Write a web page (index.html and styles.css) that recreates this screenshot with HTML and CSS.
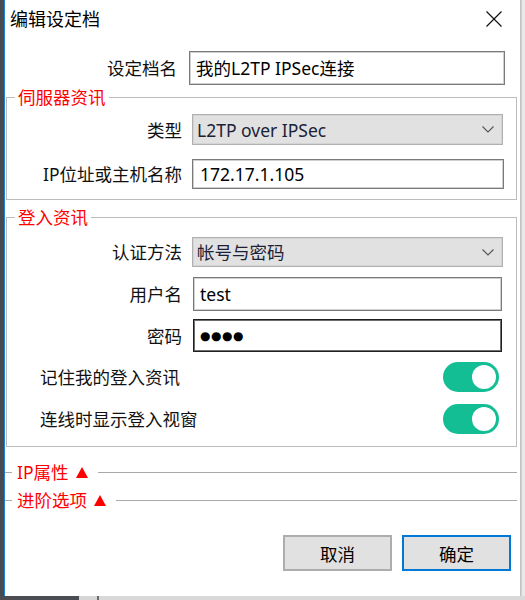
FILE: index.html
```html
<!DOCTYPE html>
<html lang="zh-CN">
<head>
<meta charset="utf-8">
<title>编辑设定档</title>
<link rel="stylesheet" href="styles.css">
</head>
<body>
<div class="screen">
  <div class="desk-left"></div>
  <div class="dialog">
    <div class="titlebar">
      <span class="title">编辑设定档</span>
      <svg class="close" width="16" height="16" viewBox="0 0 16 16"><path d="M0.5 0.5L15.5 15.5M15.5 0.5L0.5 15.5" stroke="#111" stroke-width="1.2" fill="none"/></svg>
    </div>

    <div class="name-row">
      <span class="lbl">设定档名</span>
      <div class="field">我的L2TP IPSec连接</div>
    </div>

    <fieldset class="group g1">
      <legend>伺服器资讯</legend>
      <div class="frow">
        <span class="lbl">类型</span>
        <div class="select h31"><span class="sel-text">L2TP over IPSec</span><svg class="chev" width="12" height="7" viewBox="0 0 12 7"><polyline points="0.5,0.5 6,6 11.5,0.5" fill="none" stroke="#555" stroke-width="1.1"/></svg></div>
      </div>
      <div class="frow mt14">
        <span class="lbl">IP位址或主机名称</span>
        <div class="field h30 pl7">172.17.1.105</div>
      </div>
    </fieldset>

    <fieldset class="group g2">
      <legend>登入资讯</legend>
      <div class="frow">
        <span class="lbl">认证方法</span>
        <div class="select h30"><span class="sel-text">帐号与密码</span><svg class="chev" width="12" height="7" viewBox="0 0 12 7"><polyline points="0.5,0.5 6,6 11.5,0.5" fill="none" stroke="#555" stroke-width="1.1"/></svg></div>
      </div>
      <div class="frow mt10">
        <span class="lbl">用户名</span>
        <div class="field narrow">test</div>
      </div>
      <div class="frow mt8">
        <span class="lbl">密码</span>
        <div class="field narrow h33 focused"><span class="dots">●●●●</span></div>
      </div>
      <div class="toggle-row mt10">
        <span>记住我的登入资讯</span>
        <span class="toggle"><span class="knob"></span></span>
      </div>
      <div class="toggle-row mt12">
        <span>连线时显示登入视窗</span>
        <span class="toggle"><span class="knob"></span></span>
      </div>
    </fieldset>

    <div class="collapsed c1">
      <span class="dash"></span>
      <span class="c-label">IP属性</span>
      <svg class="tri" width="12" height="11" viewBox="0 0 12 11"><polygon points="6,0 12,11 0,11" fill="#ff0000"/></svg>
      <span class="rule"></span>
    </div>
    <div class="collapsed">
      <span class="dash"></span>
      <span class="c-label">进阶选项</span>
      <svg class="tri" width="12" height="11" viewBox="0 0 12 11"><polygon points="6,0 12,11 0,11" fill="#ff0000"/></svg>
      <span class="rule"></span>
    </div>

    <div class="buttons">
      <button class="btn">取消</button>
      <button class="btn primary">确定</button>
    </div>
  </div>
  <div class="desk-right"></div>
  <div class="desk-bottom">
    <span class="db-dark"></span>
    <span class="db-light"></span>
    <span class="db-line"></span>
    <span class="db-rest"></span>
  </div>
</div>
</body>
</html>
```

FILE: styles.css
```css
* { box-sizing: border-box; }
html, body { margin: 0; padding: 0; }
body {
  width: 525px;
  height: 600px;
  overflow: hidden;
  background: #dcdcdc;
  font-family: "Noto Sans", "Noto Sans CJK SC", sans-serif;
  font-size: 17.5px;
  line-height: 20px;
  color: #111;
}
.screen {
  display: grid;
  grid-template-columns: 4px 517px 4px;
  grid-template-rows: 596px 4px;
  width: 525px;
  height: 600px;
}
.desk-left { background: #474a4f; }
.desk-right { background: #e9e9e9; border-left: 1px solid #cfcfcf; }
.desk-bottom { grid-column: 1 / 4; display: flex; }
.db-dark { width: 79px; background: #4b4d52; }
.db-light { width: 18px; background: #d6d6d6; }
.db-line { width: 2px; background: #6a6a6a; }
.db-rest { flex: 1; background: #d9d9d9; }

.dialog {
  background: #fff;
  border-left: 1px solid #1a84d8;
  border-right: 1px solid #c4c4c4;
  display: flex;
  flex-direction: column;
}
.titlebar {
  height: 40px;
  display: flex;
  align-items: center;
  justify-content: space-between;
  padding: 0 18px 2px 5px;
}
.title { font-size: 18px; color: #000; }
.close { display: block; }

.name-row {
  margin-top: 11px;
  display: grid;
  grid-template-columns: 172px 316px;
  column-gap: 12px;
  align-items: center;
}
.lbl { text-align: right; color: #111; white-space: nowrap; }

.field {
  height: 34px;
  border: 1px solid #7a7a7a;
  box-shadow: inset 0 0 0 1px #cfcfcf;
  padding-left: 6px;
  display: flex;
  align-items: center;
  color: #000;
  background: #fff;
}
.field.h30 { height: 30px; }
.field.h33 { height: 33px; }
.field.pl7 { padding-left: 7px; }
.field.narrow { margin-left: 1px; margin-right: 2px; }
.field.focused { border-color: #1f1f1f; box-shadow: inset 0 0 0 1px #6d6d6d; }
.dots { font-family: "DejaVu Sans", sans-serif; font-size: 12px; letter-spacing: 0.5px; color: #000; }

.select {
  height: 31px;
  background: #e1e1e1;
  border: 1px solid #b0b0b0;
  box-shadow: inset 0 0 0 1px #d4d4d4;
  display: flex;
  align-items: center;
  justify-content: space-between;
  padding: 0 8px 0 4px;
  margin-right: 1px;
}
.select.h30 { height: 30px; }
.sel-text { color: #1b2238; }
.chev { display: block; }

.group {
  border: 1px solid #bcbcbc;
  min-width: 0;
}
.group legend {
  margin-left: 8px;
  padding: 0 3px;
  color: #ff0000;
  line-height: 20px;
}
.g1 { margin: 2px 3px 0 1px; padding: 7px 12px 10px 0; }
.g2 { margin: 7px 3px 0 1px; padding: 10px 12px 12px 0; }

.frow {
  display: grid;
  grid-template-columns: 175px 1fr;
  column-gap: 10px;
  align-items: center;
}
.mt8 { margin-top: 8px; }
.mt10 { margin-top: 10px; }
.mt12 { margin-top: 12px; }
.mt14 { margin-top: 14px; }

.toggle-row {
  height: 30px;
  display: flex;
  align-items: center;
  justify-content: space-between;
  padding: 0 5px 0 33px;
}
.toggle {
  width: 56px;
  height: 30px;
  border-radius: 15px;
  background: #13be94;
  display: flex;
  align-items: center;
  justify-content: flex-end;
  padding-right: 3px;
}
.knob {
  width: 24px;
  height: 24px;
  border-radius: 50%;
  background: #fff;
}

.collapsed {
  height: 28px;
  display: flex;
  align-items: center;
  margin-right: 3px;
}
.c1 { margin-top: 11px; }
.dash { width: 7px; height: 1px; background: #a9a9a9; }
.c-label { color: #ff0000; padding: 0 0 0 5px; }
.tri { display: block; margin-left: 7px; }
.rule { flex: 1; height: 1px; background: #a9a9a9; margin-left: 10px; }

.buttons {
  margin-top: 21px;
  display: flex;
  justify-content: flex-end;
  gap: 10px;
  padding-right: 9px;
}
.btn {
  width: 109px;
  height: 36px;
  background: #e1e1e1;
  border: 2px solid #adadad;
  font-family: "Noto Sans", "Noto Sans CJK SC", sans-serif;
  font-size: 17.5px;
  color: #000;
  padding: 0;
}
.btn.primary { border-color: #0078d7; }
```
